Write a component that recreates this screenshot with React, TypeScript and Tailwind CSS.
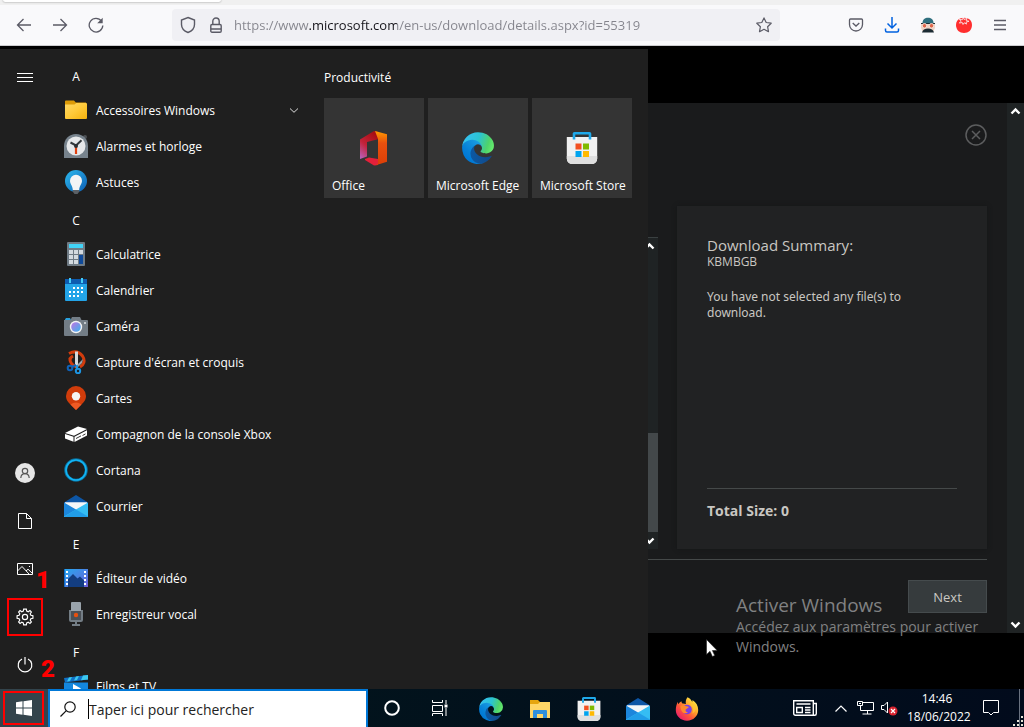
import { useId, type ReactNode } from "react";

// ---------- Icônes ----------

const EdgeIcon = ({ className }: { className: string }) => {
  const id = useId();

  return (
    <svg viewBox="4 4 257 256" className={className} aria-hidden="true">
      <defs>
        <linearGradient id={`${id}a`} x1="63" y1="177" x2="241" y2="177" gradientUnits="userSpaceOnUse">
          <stop offset="0" stopColor="#0c59a4" />
          <stop offset="1" stopColor="#114a8b" />
        </linearGradient>
        <linearGradient id={`${id}b`} x1="157" y1="100" x2="46" y2="222" gradientUnits="userSpaceOnUse">
          <stop offset="0" stopColor="#1b9de2" />
          <stop offset=".16" stopColor="#1595df" />
          <stop offset=".67" stopColor="#0680d7" />
          <stop offset="1" stopColor="#0078d4" />
        </linearGradient>
        <linearGradient id={`${id}c`} x1="20" y1="60" x2="250" y2="140" gradientUnits="userSpaceOnUse">
          <stop offset="0" stopColor="#35c1f1" />
          <stop offset=".45" stopColor="#2bc3d2" />
          <stop offset=".8" stopColor="#4fd36a" />
          <stop offset="1" stopColor="#66eb6e" />
        </linearGradient>
      </defs>
      <path
        fill={`url(#${id}a)`}
        d="M235.68 195.46a93.73 93.73 0 0 1-10.54 4.71 101.87 101.87 0 0 1-35.9 6.46c-47.32 0-88.54-32.55-88.54-74.32A31.48 31.48 0 0 1 117.13 105c-42.8 1.8-53.8 46.4-53.8 72.53 0 73.88 68.09 81.37 82.76 81.37 7.91 0 19.84-2.3 27-4.56l1.31-.44a128.34 128.34 0 0 0 66.6-52.8 4 4 0 0 0-5.32-5.64Z"
      />
      <path
        fill={`url(#${id}b)`}
        d="M110.34 246.34A79.2 79.2 0 0 1 87.6 225a80.72 80.72 0 0 1 29.53-120c3.12-1.47 8.45-4.13 15.54-4a32.35 32.35 0 0 1 25.69 13 31.88 31.88 0 0 1 6.36 18.66c0-.21 24.46-79.6-80-79.6-43.9 0-80 41.66-80 78.21a130.15 130.15 0 0 0 12.11 56 128 128 0 0 0 156.38 67.11 75.55 75.55 0 0 1-62.78-8Z"
      />
      <path
        fill={`url(#${id}c)`}
        d="M156.94 153.78c-.81 1.05-3.3 2.5-3.3 5.66 0 2.61 1.7 5.12 4.72 7.23 14.38 10 41.49 8.68 41.56 8.68a59.56 59.56 0 0 0 30.27-8.35A61.38 61.38 0 0 0 260.62 114c.26-22.41-8-37.31-11.34-43.91C228.09 28.76 182.35 5 132.62 5a128 128 0 0 0-128 126.2c.48-36.54 36.8-66.05 80-66.05 3.5 0 23.46.34 42 10.07 16.34 8.58 24.9 18.94 30.85 29.21 6.18 10.67 7.28 24.15 7.28 29.52s-2.74 13.33-7.81 19.83Z"
      />
    </svg>
  );
};

const StoreIcon = ({ className }: { className: string }) => (
  <svg viewBox="0 0 32 32" className={className} aria-hidden="true">
    <path d="M.8 5h30.4v21.5a5.500 5.500 0 0 1-5.500 5.500H6.300a5.500 5.500 0 0 1-5.500-5.500z" fill="#f1f1f1" />
    <path d="M.8 24h30.400v2.500a5.500 5.500 0 0 1-5.500 5.500H6.300a5.500 5.500 0 0 1-5.500-5.500z" fill="#dfdfdf" />
    <path d="M8 7.500V1.800Q8 1.300 8.500 1.300h15Q24 1.300 24 1.800v5.700" fill="none" stroke="#1fa9ea" strokeWidth="2.600" />
    <path fill="#f25022" d="M9.500 11.500h6v6h-6z" />
    <path fill="#7fba00" d="M17 11.500h6v6h-6z" />
    <path fill="#00a4ef" d="M9.500 19h6v6h-6z" />
    <path fill="#ffb900" d="M17 19h6v6h-6z" />
  </svg>
);

const OfficeIcon = ({ className }: { className: string }) => (
  <svg viewBox="0 0 32 36" className={className} aria-hidden="true">
    <defs>
      <linearGradient id="office-right" x1="0" y1="0" x2="0" y2="1">
        <stop offset="0" stopColor="#ff9a00" />
        <stop offset=".35" stopColor="#e8500e" />
        <stop offset="1" stopColor="#dc3e07" />
      </linearGradient>
      <linearGradient id="office-left" x1="0.600" y1="0" x2="0" y2="1">
        <stop offset="0" stopColor="#a80f14" />
        <stop offset=".5" stopColor="#c42239" />
        <stop offset="1" stopColor="#b765c4" />
      </linearGradient>
    </defs>
    <path fill="url(#office-left)" d="M2 9.500 16 1l5 1v7L9 12v14.500L2 29z" />
    <path fill="#e3203a" d="m7 29 4-1.500 9 1.500v6l-4 .6L7 30z" />
    <path fill="url(#office-right)" d="m17 1 12 3.200v27.600L17 35.500l3-2V9z" />
  </svg>
);

const MailIcon = ({ className }: { className: string }) => (
  <svg viewBox="0 0 24 24" className={className} aria-hidden="true">
    <path fill="#0d56a6" d="M0 8.500 12 1l12 7.500v4H0z" />
    <path fill="#f4f6f8" d="M1 8.200h22V10l-11 6.500L1 10z" />
    <path fill="#1c86dc" d="m0 8.400 12 7V23H0z" />
    <path fill="#35bdf3" d="M24 8.400 0 22.500V23h24z" />
    <path fill="#1b93e4" d="m12 15.400 12 7.200v.4H0z" opacity=".75" />
  </svg>
);

const FirefoxIcon = ({ className }: { className: string }) => (
  <svg viewBox="0 0 24 24" className={className} aria-hidden="true">
    <defs>
      <linearGradient id="fox-body" x1=".85" y1=".1" x2=".15" y2=".9">
        <stop offset="0" stopColor="#fff04a" />
        <stop offset=".35" stopColor="#ffa52b" />
        <stop offset=".65" stopColor="#ff5639" />
        <stop offset="1" stopColor="#e81f6b" />
      </linearGradient>
    </defs>
    <path
      fill="url(#fox-body)"
      d="M12.500.2c2 .8 3.800 2.500 4.700 4.700.3-.6.3-1.400.2-2 3.800 2.200 5.800 5.800 5.800 10.100 0 6-4.900 10.700-11.200 10.700C5.800 23.700.8 19 .8 13c0-3.200.8-6 2.200-8.200-.1 1.100 0 1.700.3 2.400.8-1.300 1.800-2.300 3.100-3 0 1 .4 1.700 1 2.300 1.200-.1 2.400.1 3.500.6C10.400 4.600 11 1.800 12.500.2z"
    />
    <circle cx="12" cy="12.500" r="4.800" fill="#7b3fe0" />
    <path fill="#ff8a2c" d="M5.500 9c1.800-1 4.200-.9 5.700.2 1 .2 2.200.2 2.600.7-.2 1.100-2.300 1.700-3.100 2.500-.6 1.500.6 2.600 2.300 2.800-1.400 1.800-4.700 1.400-6-.8C6 12.900 5.300 11 5.500 9z" />
    <path fill="#ffc832" d="M15.500 7.500c3 2.400 3.600 6.500 1.300 9.300 2.500-1 4.200-3.300 4-6.300-.3-2.800-2-5-4.300-6.200.3 1.200 0 2.300-1 3.200z" opacity=".8" />
  </svg>
);

const FolderIcon = () => (
  <svg viewBox="0 0 24 24" className="size-6" aria-hidden="true">
    <defs>
      <linearGradient id="folder" x1="0" y1="0" x2="1" y2="1">
        <stop offset="0" stopColor="#ffd966" />
        <stop offset=".5" stopColor="#ffca3a" />
        <stop offset="1" stopColor="#f5b20c" />
      </linearGradient>
    </defs>
    <path fill="#dd9b07" d="M1 3.500q0-1 1-1h8l1.800 2H22v3H1z" />
    <path fill="url(#folder)" d="M1 6.500h9.500l1.800-1.500H22q1 0 1 1v14q0 1-1 1H2q-1 0-1-1z" />
  </svg>
);

const ClockIcon = () => (
  <svg viewBox="0 0 24 24" className="size-6" aria-hidden="true">
    <circle cx="21" cy="3" r="2" fill="#4c5054" />
    <path fill="#77838d" d="M0 12C0 5 5 0 12 0s12 5 12 12v12H0z" />
    <circle cx="12" cy="12" r="9.500" fill="#e6e8ea" />
    <path stroke="#33383c" strokeWidth="2" d="m6.500 8.500 5.500 3 5.500-5.200" fill="none" />
    <path stroke="#e04010" strokeWidth="2.200" d="M12 13v7" />
    <circle cx="12" cy="12" r="2" fill="#2b2f33" />
  </svg>
);

const TipsIcon = () => (
  <svg viewBox="0 0 24 24" className="size-6" aria-hidden="true">
    <defs>
      <linearGradient id="tips" x1="0" y1="0" x2="1" y2="1">
        <stop offset="0" stopColor="#2cb9ee" />
        <stop offset="1" stopColor="#0e5fb4" />
      </linearGradient>
    </defs>
    <circle cx="12" cy="11" r="11" fill="url(#tips)" />
    <path fill="#f3f4f5" d="M12 4.800a6 6 0 0 1 6 6c0 3.500-2.600 5-2.800 9.200H8.800C8.600 15.800 6 14.300 6 10.800a6 6 0 0 1 6-6z" />
    <path fill="#5a6066" d="M8.800 20h6.400v1.800L13.500 24h-3l-1.700-2.200z" />
  </svg>
);

const CalculatorIcon = () => (
  <svg viewBox="0 0 24 24" className="size-6" aria-hidden="true">
    <rect x="3" width="18" height="24" rx="1" fill="#6f7b85" />
    <path fill="#41d3f7" d="M5 2h14v4H5z" />
    <path
      fill="#d3dae0"
      d="M5 8h4v4H5zM10 8h4v4h-4zM15 8h4v4h-4zM5 13h4v4H5zM10 13h4v4h-4zM5 18h4v4H5zM10 18h4v4h-4z"
    />
    <path fill="#0f4a9a" d="M15 13h4v9h-4z" />
  </svg>
);

const CalendarIcon = () => (
  <svg viewBox="0 0 24 24" className="size-6" aria-hidden="true">
    <path fill="#0d5cb0" d="M1 1h22v6H1z" />
    <path fill="#23a4e8" d="M1 6h22v16q0 1-1 1H2q-1 0-1-1z" />
    <path fill="#45cdf5" d="M5 0h2v5H5zM17 0h2v5h-2z" />
    <path
      fill="#fff"
      d="M9 9h2v2H9zM13 9h2v2h-2zM17 9h2v2h-2zM5 13h2v2H5zM9 13h2v2H9zM13 13h2v2h-2zM17 13h2v2h-2zM5 17h2v2H5zM9 17h2v2H9zM13 17h2v2h-2z"
    />
  </svg>
);

const CameraIcon = () => (
  <svg viewBox="0 0 24 24" className="size-6" aria-hidden="true">
    <defs>
      <linearGradient id="lens" x1="0" y1="0" x2="1" y2="1">
        <stop offset="0" stopColor="#c473e2" />
        <stop offset="1" stopColor="#35b5ef" />
      </linearGradient>
    </defs>
    <path fill="#2aa0dc" d="M1 5.500 2 4h4l1 2H1z" />
    <path fill="#737d86" d="M0 6h6.500L8 3h8l1.500 3H23q1 0 1 1v14q0 1-1 1H1q-1 0-1-1z" />
    <path fill="#c3c8cc" d="M20 8h2v2h-2z" />
    <circle cx="12" cy="13" r="6.200" fill="#f3f3f5" />
    <circle cx="12" cy="13" r="4.800" fill="url(#lens)" />
  </svg>
);

const SnipIcon = () => (
  <svg viewBox="0 0 24 24" className="size-6" aria-hidden="true">
    <path
      d="M5 3.500c5-2.500 10-2 13.500 2.500 3 4.500 1.500 9-2.500 11M6.200 11c-.6-2.500.8-4 2.800-5M6 8c-.5 5 3 8 7 9"
      fill="none"
      stroke="#d23c0d"
      strokeWidth="3"
    />
    <path fill="#d4d9dd" d="M11 1.500h3V18l-3-3z" />
    <path fill="#9aa3aa" d="m19 9-8 8 2 1 5-5z" />
    <circle cx="6" cy="18" r="2.300" fill="none" stroke="#0f62b8" strokeWidth="2" />
    <path d="m8 17 4-2" stroke="#0f62b8" strokeWidth="2" />
    <circle cx="14" cy="21" r="2.200" fill="none" stroke="#1d95e3" strokeWidth="2" />
    <path d="M13 15v4" stroke="#1d95e3" strokeWidth="2" />
  </svg>
);

const MapsIcon = () => (
  <svg viewBox="0 0 24 24" className="size-6" aria-hidden="true">
    <path fill="#d03c0b" d="M12 0a10 10 0 0 1 10 10c0 5-3.500 7.500-10 14C5.500 17.500 2 15 2 10A10 10 0 0 1 12 0z" />
    <path fill="#ee5a24" d="M6.500 18.500Q12 14.500 17.500 18.500L12 24z" />
    <circle cx="12" cy="10.300" r="4.200" fill="#f5f5f5" />
  </svg>
);

const XboxIcon = () => (
  <svg viewBox="0 0 24 24" className="size-6" aria-hidden="true">
    <path fill="#fff" d="m1 11 13-6.500 9 2.500-13 6.700z" />
    <path fill="#fff" d="m1 12 8.500 2.800v5L1 16.500zM10.500 14.800 23 8.300v5.200l-12.500 6.500z" />
    <path stroke="#1f1f1f" strokeWidth=".9" d="m12 16.500 5-2.600M18.500 13.500l3-1.600" />
  </svg>
);

const CortanaIcon = () => (
  <svg viewBox="0 0 24 24" className="size-6" aria-hidden="true">
    <circle cx="12" cy="12" r="10.300" fill="none" stroke="#0a6f9c" strokeWidth="3" />
    <circle cx="12" cy="12" r="10" fill="none" stroke="#12b5f5" strokeWidth="1.600" />
  </svg>
);

const VideoIcon = () => (
  <svg viewBox="0 0 24 24" className="size-6" aria-hidden="true">
    <defs>
      <linearGradient id="video" x1="0" y1="0" x2="1" y2="1">
        <stop offset="0" stopColor="#25a8ef" />
        <stop offset="1" stopColor="#6e5ed8" />
      </linearGradient>
    </defs>
    <path fill="url(#video)" d="M0 3h24v18H0z" />
    <path fill="#133d80" d="m4 21V13l5-5 4.500 4.500L16 10.500l4 4V21z" />
    <path fill="#0f6cc8" d="M0 3h1v18H0z" />
    <path
      fill="#fff"
      d="M2 5h2v2H2zM2 9h2v2H2zM2 13h2v2H2zM2 17h2v2H2zM20 5h2v2h-2zM20 9h2v2h-2zM20 13h2v2h-2zM20 17h2v2h-2z"
    />
  </svg>
);

const RecorderIcon = () => (
  <svg viewBox="0 0 24 24" className="size-6" aria-hidden="true">
    <path fill="#99a3ab" d="M7 1q0-1 1-1h8q1 0 1 1v9H7z" />
    <path fill="#737d85" d="M5 8h2v8h10V8h2v10q0 2-2 2H7q-2 0-2-2z" />
    <path fill="#4b5157" d="M7 9h10v9H7z" />
    <circle cx="12" cy="13" r="2.200" fill="#e8500f" />
    <path fill="#737d85" d="M11 20h2v2h3v2H8v-2h3z" />
  </svg>
);

const MoviesIcon = () => (
  <svg viewBox="0 0 24 24" className="size-6" aria-hidden="true">
    <path fill="#1072c8" d="m0 4 24-3v4.500L1 8.500z" />
    <path fill="#3cc8ef" d="m5 3.500 3-.5-2 4-3 .5zM12 2.500l3-.5-2 4-3 .5zM19 1.600l5-.6v4.500l-7 .8z" />
    <path fill="#1487dd" d="M0 8.500h24V24H0z" />
    <path fill="#fff" d="m9 10 8 4.500L9 19z" />
  </svg>
);

const ScrollChevron = ({ down = false }: { down?: boolean }) => (
  <svg viewBox="0 0 17 17" className={down ? "size-[17px] shrink-0 rotate-180" : "size-[17px] shrink-0"} aria-hidden="true">
    <path d="m4.500 10.500 4-4 4 4" fill="none" stroke="#fff" strokeWidth="2.400" />
  </svg>
);

// ---------- Données ----------

const appGroups: { letter: string; apps: { title: string; icon: ReactNode; folder?: boolean }[] }[] = [
  {
    letter: "A",
    apps: [
      { title: "Accessoires Windows", icon: <FolderIcon />, folder: true },
      { title: "Alarmes et horloge", icon: <ClockIcon /> },
      { title: "Astuces", icon: <TipsIcon /> },
    ],
  },
  {
    letter: "C",
    apps: [
      { title: "Calculatrice", icon: <CalculatorIcon /> },
      { title: "Calendrier", icon: <CalendarIcon /> },
      { title: "Caméra", icon: <CameraIcon /> },
      { title: "Capture d'écran et croquis", icon: <SnipIcon /> },
      { title: "Cartes", icon: <MapsIcon /> },
      { title: "Compagnon de la console Xbox", icon: <XboxIcon /> },
      { title: "Cortana", icon: <CortanaIcon /> },
      { title: "Courrier", icon: <MailIcon className="size-6" /> },
    ],
  },
  {
    letter: "E",
    apps: [
      { title: "Éditeur de vidéo", icon: <VideoIcon /> },
      { title: "Enregistreur vocal", icon: <RecorderIcon /> },
    ],
  },
  {
    letter: "F",
    apps: [{ title: "Films et TV", icon: <MoviesIcon /> }],
  },
];

const tiles = [
  { title: "Office", icon: <OfficeIcon className="h-9 w-8" /> },
  { title: "Microsoft Edge", icon: <EdgeIcon className="size-8" /> },
  { title: "Microsoft Store", icon: <StoreIcon className="size-8" /> },
];

const pinned = [
  { title: "Microsoft Edge", icon: <EdgeIcon className="size-6" /> },
  {
    title: "Explorateur de fichiers",
    icon: (
      <svg viewBox="0 0 24 24" className="size-6" aria-hidden="true">
        <path fill="#e5a50f" d="M2 3h8l2 2h10v4H2z" />
        <path fill="#ffd667" d="M2 7h8l2-2h10v16H2z" />
        <path fill="#2f8fdb" d="M5 14q0-1 1-1h12q1 0 1 1v7h-4v-4H9v4H5z" />
      </svg>
    ),
  },
  { title: "Microsoft Store", icon: <StoreIcon className="size-6" /> },
  { title: "Courrier", icon: <MailIcon className="size-6" /> },
  { title: "Firefox", icon: <FirefoxIcon className="size-6" /> },
];

// ---------- Navigateur ----------

const NavButton = ({ label, children }: { label: string; children: ReactNode }) => (
  <button aria-label={label} className="flex h-8 w-9 items-center justify-center text-[#5b5b66]">
    <svg viewBox="0 0 16 16" className="size-4" fill="none" stroke="currentColor" strokeWidth="1.300" aria-hidden="true">
      {children}
    </svg>
  </button>
);

const BrowserBar = () => (
  <header className="shrink-0 bg-[#f0f0f0]">
    <div className="flex h-[5px]">
      <div className="ml-[3px] h-[2px] w-[218px] rounded-b-sm bg-white shadow-[0_0_2px_#808080]" />
    </div>
    <div className="flex h-[41px] items-center border-b border-[#cccccf] bg-[#f9f9fb] pl-[6px] pr-[6px]">
      <NavButton label="Page précédente">
        <path d="M15 8H1.500M7.500 2 1.500 8l6 6" />
      </NavButton>
      <NavButton label="Page suivante">
        <path d="M1 8h13.500M8.500 2l6 6-6 6" />
      </NavButton>
      <NavButton label="Actualiser">
        <path d="M13.500 4.200A6.800 6.800 0 1 0 14.800 8.500" />
        <path d="M14.700.8v5.500H9.200z" fill="currentColor" stroke="none" />
      </NavButton>

      <div className="ml-[58px] mr-[58px] flex h-8 flex-1 items-center rounded bg-[#f0f0f4] px-2 text-[#5b5b66]">
        <svg viewBox="0 0 16 18" className="h-[18px] w-4 shrink-0" fill="none" stroke="currentColor" strokeWidth="1.400" aria-hidden="true">
          <path d="M8 1.500 14.500 4v4.500c0 3.800-2.800 6.600-6.500 8-3.700-1.400-6.500-4.200-6.500-8V4z" />
        </svg>
        <svg viewBox="0 0 12 16" className="ml-3.5 h-4 w-3 shrink-0" fill="none" stroke="currentColor" strokeWidth="1.400" aria-hidden="true">
          <rect x=".8" y="7.500" width="10.400" height="7.700" rx="1.200" />
          <path d="M2.800 7.500v-3.300a3.200 3.200 0 0 1 6.400 0v3.300M1 12h10" />
        </svg>
        <input
          type="text"
          aria-label="Adresse"
          defaultValue="https://www.microsoft.com/en-us/download/details.aspx?id=55319"
          className="ml-3 min-w-0 flex-1 bg-[linear-gradient(90deg,#84848c_75px,#15141a_75px,#15141a_163px,#84848c_163px)] bg-clip-text pt-0.5 text-[13px] text-transparent outline-none"
        />
        <button aria-label="Marquer cette page">
          <svg viewBox="0 0 16 16" className="size-4" fill="none" stroke="currentColor" strokeWidth="1.200" strokeLinejoin="round" aria-hidden="true">
            <path d="m8 .9 2.200 4.600 5 .7-3.600 3.500.9 5L8 12.300l-4.500 2.400.9-5L.8 6.200l5-.7z" />
          </svg>
        </button>
      </div>

      <NavButton label="Pocket">
        <path d="M2.500 2h11q1 0 1 1v4.500a6.500 6.500 0 0 1-13 0V3q0-1 1-1z" />
        <path d="m4.700 6 3.300 3 3.300-3" />
      </NavButton>
      <button aria-label="Téléchargements" className="flex h-8 w-9 items-center justify-center">
        <svg viewBox="0 0 16 16" className="size-4" fill="none" stroke="#0061e0" strokeWidth="1.500" aria-hidden="true">
          <path d="M8 0v10.500M3.500 6.500 8 11l4.500-4.500M1.500 11.500v2q0 1.500 1.500 1.500h10q1.500 0 1.500-1.500v-2" />
        </svg>
      </button>
      <button aria-label="Navigation privée" className="flex h-8 w-9 items-center justify-center">
        <svg viewBox="0 0 16 16" className="size-4" aria-hidden="true">
          <path fill="#f0d3c4" d="M1 6h14v5q-1 3-3 4H4q-2-1-3-4z" />
          <path fill="#2f6f7e" d="M2.500 6C2.500 2.500 5 .8 8 .8s5.500 1.700 5.500 5.200z" />
          <path fill="#1c2b33" d="M1 6h14v1H1zM2 15.500q1-4 6-4t6 4z" />
          <circle cx="4.500" cy="8.800" r="2.300" fill="#e0674c" stroke="#f3e6dc" />
          <circle cx="11.500" cy="8.800" r="2.300" fill="#e0674c" stroke="#f3e6dc" />
        </svg>
      </button>
      <button aria-label="Tomate" className="flex h-8 w-9 items-center justify-center">
        <svg viewBox="0 0 16 16" className="size-4" aria-hidden="true">
          <path fill="#ff2e2e" d="M4 1.500q4-1.500 8 0c2.500 1 4 3.200 4 6.500 0 5-3.500 8-8 8s-8-3-8-8c0-3.300 1.500-5.500 4-6.500z" />
          <path d="M7.500 0 8 2.500l3-1-.8 2 2.800.8-3 .8.500 2L8.200 5.800 7 7.500l-.7-2-3 .6L5 4.200 3.300 2.300l3 .5z" stroke="#f9f9fb" fill="none" strokeWidth=".8" />
        </svg>
      </button>
      <NavButton label="Menu">
        <path d="M2 3.500h12M2 8h12M2 12.500h12" />
      </NavButton>
    </div>
  </header>
);

// ---------- Menu Démarrer ----------

const RailButton = ({ label, children }: { label: string; children: ReactNode }) => (
  <button aria-label={label} className="flex size-12 items-center justify-center pl-[2px]">
    {children}
  </button>
);

const StartMenu = () => (
  <section className="mt-[3px] flex w-[648px] shrink-0 overflow-hidden bg-[#1f1f1f] text-xs text-white">
    <nav className="flex w-12 shrink-0 flex-col">
      <button aria-label="Démarrer" className="flex h-14 items-center justify-center pl-[2px]">
        <svg viewBox="0 0 16 9" className="h-[9px] w-4" fill="#fff" aria-hidden="true">
          <path d="M0 0h16v1H0zM0 4h16v1H0zM0 8h16v1H0z" />
        </svg>
      </button>

      <div className="mt-auto flex flex-col">
        <RailButton label="Compte">
          <svg viewBox="0 0 20 20" className="size-5" fill="none" stroke="#555" strokeWidth="1.200" aria-hidden="true">
            <circle cx="10" cy="10" r="10" fill="#e6e6e6" stroke="none" />
            <circle cx="10" cy="8" r="2.700" />
            <path d="M5.800 15c.2-2.800 1.800-4.300 4.200-4.300s4 1.500 4.200 4.300" />
          </svg>
        </RailButton>
        <RailButton label="Documents">
          <svg viewBox="0 0 14 16" className="h-4 w-3.5" fill="none" stroke="#fff" aria-hidden="true">
            <path d="M.5.500h8l5 5v10H.500zM8.500.500v5h5" />
          </svg>
        </RailButton>
        <RailButton label="Images">
          <svg viewBox="0 0 16 12" className="h-3 w-4" fill="none" stroke="#fff" aria-hidden="true">
            <path d="M.5.500h15v11H.500zM.500 8 5 3.500l7.500 8M9 8l2-1.800 4.500 4.300M12 3.500h1" />
          </svg>
        </RailButton>
        <div className="relative">
          <RailButton label="Paramètres">
            <svg viewBox="0 0 20 20" className="size-[18px]" fill="none" stroke="#fff" strokeWidth="1.300" aria-hidden="true">
              <circle cx="10" cy="10" r="2.900" />
              <path d="m8.500 1.200-.4 2.300-1.700.7L4.500 2.900 2.900 4.500l1.300 1.900-.7 1.700-2.300.4v3l2.300.4.700 1.700-1.300 1.900 1.600 1.600 1.900-1.300 1.700.7.400 2.300h3l.4-2.300 1.700-.7 1.900 1.300 1.600-1.600-1.300-1.900.7-1.700 2.300-.4v-3l-2.300-.4-.7-1.700 1.300-1.900-1.600-1.600-1.900 1.300-1.700-.7-.4-2.300z" />
            </svg>
          </RailButton>
          <span className="pointer-events-none absolute inset-y-[5px] left-[7px] w-9 border-2 border-[#ff0000]" />
          <span className="absolute -top-[27px] left-9 font-['Roboto',sans-serif] text-2xl leading-7 font-black text-[#ff0000]">
            1
          </span>
        </div>
        <div className="relative">
          <RailButton label="Marche/Arrêt">
            <svg viewBox="0 0 16 16" className="size-4" fill="none" stroke="#fff" strokeWidth="1.200" aria-hidden="true">
              <path d="M8 0v7.500M5 2A6.800 6.800 0 1 0 11 2" />
            </svg>
          </RailButton>
          <span className="absolute top-[14px] left-[41px] font-['Roboto',sans-serif] text-2xl leading-7 font-black text-[#ff0000]">
            2
          </span>
        </div>
      </div>
    </nav>

    {/* Liste des applications */}
    <ul className="mt-[7px] h-0 w-[264px] shrink-0">
      {appGroups.map((group) => (
        <li key={group.letter}>
          <h2 className="flex h-9 w-14 items-center justify-center pt-1.5">{group.letter}</h2>
          <ul>
            {group.apps.map((app) => (
              <li key={app.title}>
                <button className="flex h-9 w-full items-center gap-2 pr-3.5 pl-4">
                  {app.icon}
                  <span className="pt-0.5 whitespace-nowrap">{app.title}</span>
                  {app.folder && (
                    <svg viewBox="0 0 8 5" className="ml-auto h-[5px] w-2" fill="none" stroke="#ddd" aria-hidden="true">
                      <path d="m0 .5 4 3.800L8 .5" />
                    </svg>
                  )}
                </button>
              </li>
            ))}
          </ul>
        </li>
      ))}
    </ul>

    {/* Vignettes */}
    <div className="ml-3 pt-[19px]">
      <h2 className="leading-5">Productivité</h2>
      <div className="mt-[10px] flex gap-1">
        {tiles.map((tile) => (
          <button key={tile.title} className="relative flex size-[100px] items-center justify-center bg-[#343434]">
            {tile.icon}
            <span className="absolute bottom-1 left-2 whitespace-nowrap">{tile.title}</span>
          </button>
        ))}
      </div>
    </div>
  </section>
);

// ---------- Page de téléchargement ----------

const DownloadPage = () => (
  <main className="relative flex-1 bg-black pt-[57px] text-[#c9c7c2]">
    <div className="flex bg-[#1a1b1c]">
      <div className="flex-1 pr-5">
        <div className="flex h-[103px] items-start justify-end pt-[21px]">
          <button aria-label="Close">
            <svg viewBox="0 0 22 22" className="size-[22px]" fill="none" stroke="#5c5d5e" strokeWidth="1.500" aria-hidden="true">
              <circle cx="11" cy="11" r="10" />
              <path d="m7 7 8 8M15 7l-8 8" />
            </svg>
          </button>
        </div>

        <div className="flex h-[343px] gap-[19px]">
          <div className="mt-[31px] flex w-[10px] flex-col items-end overflow-hidden border-t border-[#3a4041] bg-[#1f2324]">
            <ScrollChevron />
            <div className="mt-auto h-[99px] w-full shrink-0 bg-[#43484a]" />
            <ScrollChevron down />
          </div>
          <section className="flex flex-1 flex-col bg-[#212223] px-[30px] pt-[29px] pb-7 shadow-[0_0_4px_#151617]">
            <h1 className="text-[15px] leading-5">Download Summary:</h1>
            <p className="text-xs leading-3.5">KBMBGB</p>
            <p className="mt-5 font-['Noto_Sans',sans-serif] text-xs leading-4">
              You have not selected any file(s) to download.
            </p>
            <p className="mt-auto border-t border-[#454949] pt-3 text-sm leading-5 font-bold">Total Size: 0</p>
          </section>
        </div>

        <div className="mt-2.5 flex justify-end border-t border-[#454949] py-5">
          <button className="h-[33px] w-[79px] border border-[#454b4d] bg-[#363b3d] pt-0.5 text-[13px]">Next</button>
        </div>
      </div>

      <div className="flex w-[17px] flex-col justify-between bg-[#1f2324]">
        <ScrollChevron />
        <ScrollChevron down />
      </div>
    </div>

    {/* Filigrane d'activation */}
    <div className="pointer-events-none absolute right-0 bottom-8 w-[288px] text-[#808182]">
      <p className="text-[19px] leading-6">Activer Windows</p>
      <p className="text-sm leading-5">
        Accédez aux paramètres pour activer
        <br />
        Windows.
      </p>
    </div>

    <svg viewBox="0 0 12 18" className="absolute bottom-8 left-[58px] h-[18px] w-3" aria-hidden="true">
      <path fill="#fff" stroke="#222" strokeWidth=".6" d="M.5.500v15l3.500-3.200 2.400 5.200 2.300-1-2.300-5h4.800z" />
    </svg>
  </main>
);

// ---------- Barre des tâches ----------

const Taskbar = () => (
  <footer className="flex h-[38px] shrink-0 bg-linear-to-r from-[#02171c] to-[#020b1c] text-white">
    <button aria-label="Démarrer" className="relative flex w-12 shrink-0 items-center justify-center bg-[#33444c]">
      <svg viewBox="0 0 16 16" className="size-4" fill="#fff" aria-hidden="true">
        <path d="M0 2.200 6.500 1.300v6.200H0zM7.500 1.200 16 0v7.500H7.500zM0 8.500h6.500v6.200L0 13.800zM7.500 8.500H16V16l-8.500-1.200z" />
      </svg>
      <span className="pointer-events-none absolute inset-y-[2px] right-[4px] left-[3px] border-2 border-[#ff0000]" />
    </button>

    <label className="flex w-80 shrink-0 items-center border-2 border-b-0 border-[#0078d7] bg-white pl-2.5">
      <svg viewBox="0 0 16 16" className="size-4 shrink-0" fill="none" stroke="#111" strokeWidth="1.200" aria-hidden="true">
        <circle cx="10" cy="6" r="5.200" />
        <path d="M6.300 9.700.5 15.500" />
      </svg>
      <span className="ml-3 h-5 w-px bg-black" />
      <input
        type="text"
        aria-label="Rechercher"
        placeholder="Taper ici pour rechercher"
        className="min-w-0 flex-1 pt-0.5 text-sm text-black outline-none placeholder:text-[#222]"
      />
    </label>

    <div className="flex">
      <button aria-label="Cortana" className="flex w-12 items-center justify-center">
        <svg viewBox="0 0 16 16" className="size-4" fill="none" stroke="#fff" strokeWidth="2" aria-hidden="true">
          <circle cx="8" cy="8" r="6.800" />
        </svg>
      </button>
      <button aria-label="Affichage des tâches" className="mr-[2px] flex w-12 items-center justify-center">
        <svg viewBox="0 0 16 16" className="size-4" fill="none" stroke="#fff" aria-hidden="true">
          <path d="M.5 0v2.500h10V0M.500 5.500h10v6H.500zM.500 16v-2.500h10V16M14 0v4M14 8v8" />
          <path d="M12.500 4.500h3v3h-3z" fill="#fff" stroke="none" />
        </svg>
      </button>
      {pinned.map((app) => (
        <button key={app.title} aria-label={app.title} className="flex w-[49px] items-center justify-center pt-[2px]">
          {app.icon}
        </button>
      ))}
    </div>

    <div className="relative ml-auto flex items-center pr-1">
      <svg viewBox="0 0 24 16" className="h-4 w-6" fill="none" stroke="#fff" strokeWidth="1.400" aria-hidden="true">
        <path d="M.7.7h19.600v14.600H2.500Q.7 15.300.7 13.500zM20.300 3.500h3v10q0 1.800-1.500 1.800h-2" />
        <path d="M3.500 4h14M12 7.500h5.500M12 10h5.500M12 12.500h5.500M3.700 7.500h5.600v5H3.700z" />
      </svg>
      <svg viewBox="0 0 12 7" className="ml-[18px] h-[7px] w-3" fill="none" stroke="#fff" strokeWidth="1.200" aria-hidden="true">
        <path d="m.5 6.500 5.500-5.500 5.500 5.500" />
      </svg>
      <svg viewBox="0 0 17 14" className="ml-2.5 h-3.5 w-[17px]" fill="none" stroke="#fff" aria-hidden="true">
        <path d="M6 1.500h10.500v8H3.500V5M10.500 9.500v3.500M5.500 13h9M.5.500h5v4H.500zM2 2.500h2" />
      </svg>
      <svg viewBox="0 0 17 16" className="ml-[7px] h-4 w-[17px]" fill="none" stroke="#fff" aria-hidden="true">
        <path d="M.5 5.500v4H3l3.500 3.500v-11L3 5.500z" />
        <circle cx="12" cy="11" r="4.500" fill="#d8232f" stroke="none" />
        <path d="m10 9 4 4M14 9l-4 4" strokeWidth="1.200" />
      </svg>
      <div className="ml-[9px] w-[60px] text-center text-xs leading-[18px] whitespace-nowrap">
        <p>14:46</p>
        <p>18/06/2022</p>
      </div>
      <button aria-label="Notifications" className="ml-4">
        <svg viewBox="0 0 16 16" className="size-4" fill="none" stroke="#fff" aria-hidden="true">
          <path d="M.5.500h15v12h-5L8 15l-2.500-2.500h-5z" />
        </svg>
      </button>
      <span className="ml-5 h-full w-px bg-[#6a7280]" />
      <svg viewBox="0 0 12 12" className="absolute right-0 bottom-0 size-3" fill="#e8e4d8" aria-hidden="true">
        <path d="M9 1h2v2H9zM5 5h2v2H5zM9 5h2v2H9zM1 9h2v2H1zM5 9h2v2H5zM9 9h2v2H9z" />
      </svg>
    </div>
  </footer>
);

export default function App() {
  return (
    <div className="flex h-screen flex-col overflow-hidden bg-black font-['Open_Sans','Noto_Sans',sans-serif]">
      <BrowserBar />
      <div className="flex min-h-0 flex-1">
        <StartMenu />
        <DownloadPage />
      </div>
      <Taskbar />
    </div>
  );
}
